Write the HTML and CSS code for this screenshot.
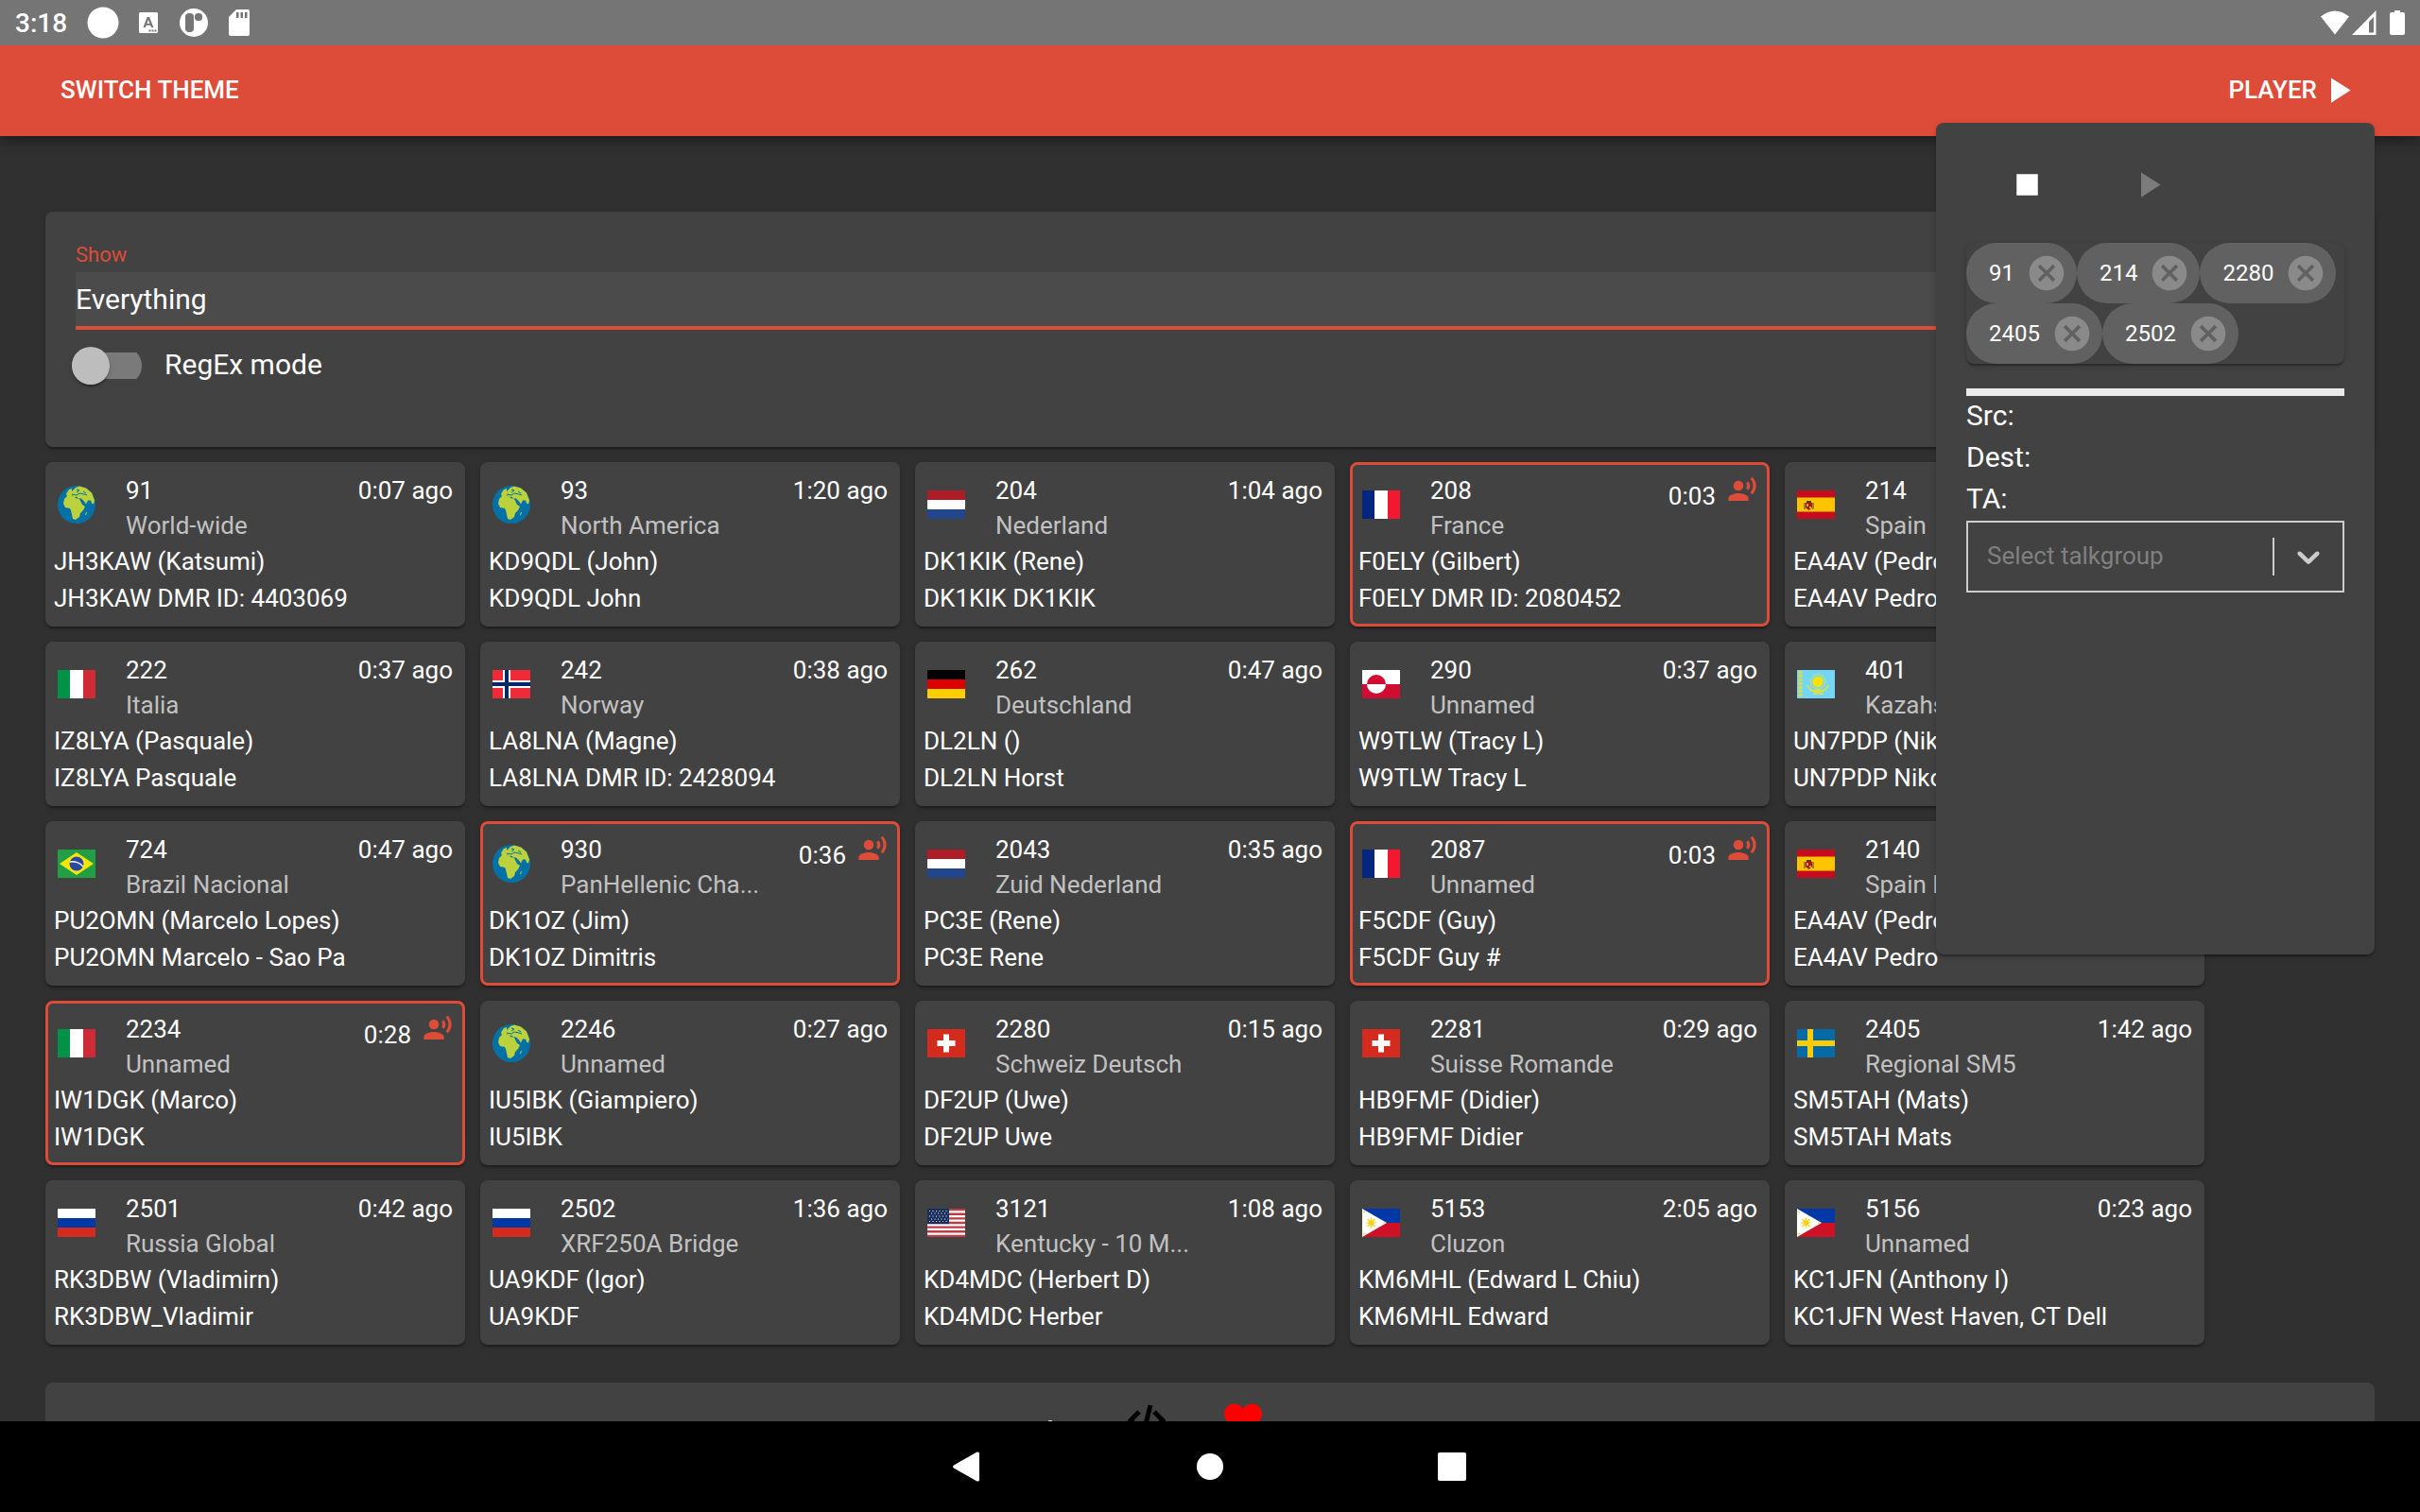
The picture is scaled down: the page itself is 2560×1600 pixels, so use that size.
FILE: index.html
```html
<!DOCTYPE html>
<html lang="en">
<head>
<meta charset="utf-8">
<meta name="viewport" content="width=device-width, initial-scale=1">
<title>Talkgroup monitor</title>
<link rel="stylesheet" href="styles.css">
</head>
<body>
<svg class="sprite" aria-hidden="true">
  <symbol id="i-play" viewBox="0 0 24 24"><path d="M8 5v14l11-7z"/></symbol>
  <symbol id="i-stop" viewBox="0 0 24 24"><path d="M6 6h12v12H6z"/></symbol>
  <symbol id="i-cancel" viewBox="0 0 24 24"><path d="M12 2C6.47 2 2 6.47 2 12s4.47 10 10 10 10-4.47 10-10S17.53 2 12 2zm5 13.59L15.59 17 12 13.41 8.41 17 7 15.59 10.59 12 7 8.41 8.41 7 12 10.59 15.59 7 17 8.41 13.41 12 17 15.59z"/></symbol>
  <symbol id="i-voice" viewBox="0 0 24 24"><circle cx="9" cy="9" r="4"/><path d="M9 15c-2.67 0-8 1.34-8 4v2h16v-2c0-2.660-5.330-4-8-4zM16.760 5.360l-1.680 1.690c.84 1.180.84 2.710 0 3.890l1.680 1.690c2.020-2.020 2.020-5.070 0-7.270zM20.070 2l-1.630 1.630c2.770 3.020 2.770 7.560 0 10.740L20.070 16c3.900-3.890 3.910-9.950 0-14z"/></symbol>
  <symbol id="i-world" viewBox="0 0 40 40"><circle cx="20" cy="20" r="20" fill="#0471a6"/><path fill="#bcd23c" d="M10 7l2-3 3-1v3l4-4 4-1.500 7 2 6 5 3 8-1 4-2-1-1-3-3 0-2 4-2-3-3-3-3 0-2-2-2 1-2-2-4 1-2 0-1-3zM7 14l3-3 6 0 3 2 4 1 3 6 3 2-2 4-3 3-1 4-4 3-3-1-2-9-1-2-5-1-2-4zM29 31l1-3 1 0-1 3z"/><path fill="none" stroke="#0471a6" d="M15 9l5 1 3-2 5 1 3 1M24 14l3 5M20 4l3 1-3 2M27 6l3 2"/></symbol>
  <symbol id="i-nl" viewBox="0 0 40 30"><path fill="#ae1c28" d="M0 0h40v10H0z"/><path fill="#fff" d="M0 10h40v10H0z"/><path fill="#21468b" d="M0 20h40v10H0z"/></symbol>
  <symbol id="i-fr" viewBox="0 0 40 30"><path fill="#00267f" d="M0 0h14v30H0z"/><path fill="#fff" d="M13 0h14v30H13z"/><path fill="#f31830" d="M27 0h13v30H27z"/></symbol>
  <symbol id="i-it" viewBox="0 0 40 30"><path fill="#009246" d="M0 0h14v30H0z"/><path fill="#fff" d="M13 0h14v30H13z"/><path fill="#ce2b37" d="M27 0h13v30H27z"/></symbol>
  <symbol id="i-es" viewBox="0 0 40 30"><path fill="#c60b1e" d="M0 0h40v30H0z"/><path fill="#ffc400" d="M0 7.500h40v15H0z"/><path fill="#ad1519" d="M9 13h7v5l-3.500 3L9 18z"/><path fill="#c8b100" d="M10 14h2v3h-2zM13 17h2v2h-2z"/><path fill="#5a3a1a" d="M10 11h5v2h-5zM7.500 13h1v7h-1zM16.500 13h1v7h-1z"/></symbol>
  <symbol id="i-no" viewBox="0 0 40 30"><path fill="#ef2b3a" d="M0 0h40v30H0z"/><path fill="#fff" d="M11 0h8v30h-8zM0 11h40v8H0z"/><path fill="#002868" d="M13 0h4v30h-4zM0 13h40v4H0z"/></symbol>
  <symbol id="i-de" viewBox="0 0 40 30"><path fill="#000" d="M0 0h40v10H0z"/><path fill="#d00" d="M0 10h40v10H0z"/><path fill="#ffce00" d="M0 20h40v10H0z"/></symbol>
  <symbol id="i-gl" viewBox="0 0 40 30"><path fill="#fff" d="M0 0h40v15H0z"/><path fill="#d00c33" d="M0 15h40v15H0zM5 15a10 10 0 0 1 20 0z"/><path fill="#fff" d="M5 15a10 10 0 0 0 20 0z"/></symbol>
  <symbol id="i-kz" viewBox="0 0 40 30"><path fill="#74d7f7" d="M0 0h40v30H0z"/><circle cx="22" cy="12.500" r="5.500" fill="#ffe400"/><circle cx="22" cy="12.500" r="7.500" fill="none" stroke="#ffe400" stroke-width="1.500" stroke-dasharray="1 1"/><path fill="none" stroke="#e3e23a" stroke-width="1.500" d="M11 16c2 6 7 7 11 5 4 2 9 1 11-5M14 21c5 3 12 3 16 0M17 25h11"/><path stroke="#d8dc4a" stroke-width="4" stroke-dasharray="3 1" d="M3.500 1v28"/></symbol>
  <symbol id="i-br" viewBox="0 0 40 30"><path fill="#229e45" d="M0 0h40v30H0z"/><path fill="#f8e509" d="M20 3l18 12-18 12L2 15z"/><circle cx="20" cy="15" r="7.500" fill="#2b49a3"/><path fill="none" stroke="#fff" stroke-width="1.500" d="M13 13c5-1 11 1 14 5"/></symbol>
  <symbol id="i-ch" viewBox="0 0 40 30"><path fill="#d52b1e" d="M0 0h40v30H0z"/><path fill="#fff" d="M17 5.500h6V12h6.500v6H23v6.500h-6V18h-6.500v-6H17z"/></symbol>
  <symbol id="i-se" viewBox="0 0 40 30"><path fill="#066aa7" d="M0 0h40v30H0z"/><path fill="#fecc00" d="M11 0h6v30h-6zM0 12h40v6H0z"/></symbol>
  <symbol id="i-ru" viewBox="0 0 40 30"><path fill="#fff" d="M0 0h40v10H0z"/><path fill="#0039a6" d="M0 10h40v10H0z"/><path fill="#d52b1e" d="M0 20h40v10H0z"/></symbol>
  <symbol id="i-us" viewBox="0 0 40 30"><path fill="#fff" d="M0 0h40v30H0z"/><path stroke="#bd3d44" stroke-width="2.300" d="M0 1.150h40M0 5.770h40M0 10.380h40M0 15h40M0 19.620h40M0 24.230h40M0 28.850h40"/><path fill="#192f5d" d="M0 0h23v16.150H0z"/><path stroke="#fff" stroke-dasharray="1 2.500" d="M2 2.500h20M4 5h18M2 8h20M4 11h18M2 13.500h20"/></symbol>
  <symbol id="i-ph" viewBox="0 0 40 30"><path fill="#0038a8" d="M0 0h40v15H0z"/><path fill="#ce1126" d="M0 15h40v15H0z"/><path fill="#fff" d="M0 0l26 15L0 30z"/><circle cx="9.500" cy="15" r="3" fill="#fcd116"/><path stroke="#fcd116" stroke-width="1.200" d="M4 15h11M9.500 9.500v11M5.500 11l8 8M5.500 19l8-8M1 3l2 1M1 27l2-1M22 15h2"/></symbol>
</svg>

<header class="status">
  <span class="clock">3:18</span>
  <svg width="34" height="34" viewBox="0 0 34 34"><circle cx="17" cy="17" r="16.500"/></svg>
  <svg class="status-a" width="20" height="22" viewBox="0 0 20 22"><path fill-rule="evenodd" d="M1.500 0h17Q20 0 20 1.500v19q0 1.500-1.500 1.500h-17Q0 22 0 20.500v-19Q0 0 1.500 0zM8.700 5L4.500 16h2.300l.9-2.300h4.400L13 16h2.300L11.100 5zM9.900 7.700l1.500 4.200h-3zM10.500 18.500v2h2v-2zM13.500 18.500v2h2v-2zM16.500 18.500v2h2v-2z"/></svg>
  <svg class="status-p" width="30" height="30" viewBox="0 0 30 30"><circle cx="15" cy="15" r="15"/><rect x="6" y="5" width="9" height="20" rx="4" fill="#757575"/><rect x="16" y="5" width="8" height="8" rx="3.500" fill="#757575"/></svg>
  <svg class="status-sd" width="22" height="28" viewBox="0 0 22 28"><path d="M8 0h12q2 0 2 2v24q0 2-2 2H2q-2 0-2-2V8z"/><path fill="#757575" d="M8 3h2.500v6H8zM12.500 3H15v6h-2.500zM17 3h2.500v6H17z"/></svg>
  <span class="spacer"></span>
  <svg width="30" height="26" viewBox="0 0 30 26"><path d="M15 25.500L0 6.500Q15-5.500 30 6.500z"/></svg>
  <svg class="status-signal" width="26" height="26" viewBox="0 0 26 26"><path fill-rule="evenodd" d="M25.500 0v26H0zM23 7l-5 5v11.500h5z"/></svg>
  <svg width="16" height="26" viewBox="0 0 16 26"><path d="M5 0h6v2h3q2 0 2 2v20q0 2-2 2H2q-2 0-2-2V4q0-2 2-2h3z"/></svg>
</header>

<div class="app">
  <div class="appbar">
    <button class="bar-btn" type="button">SWITCH THEME</button>
    <div class="player">
      <button class="bar-btn" type="button">PLAYER<svg class="icon"><use href="#i-play"/></svg></button>
      <section class="panel" aria-label="Player">
        <div class="controls">
          <button type="button" aria-label="Stop"><svg class="icon"><use href="#i-stop"/></svg></button>
          <button type="button" aria-label="Play" disabled><svg class="icon"><use href="#i-play"/></svg></button>
        </div>
        <div class="chips">
          <span class="chip">91<button type="button" aria-label="Remove 91"><svg><use href="#i-cancel"/></svg></button></span>
          <span class="chip">214<button type="button" aria-label="Remove 214"><svg><use href="#i-cancel"/></svg></button></span>
          <span class="chip">2280<button type="button" aria-label="Remove 2280"><svg><use href="#i-cancel"/></svg></button></span>
          <span class="chip">2405<button type="button" aria-label="Remove 2405"><svg><use href="#i-cancel"/></svg></button></span>
          <span class="chip">2502<button type="button" aria-label="Remove 2502"><svg><use href="#i-cancel"/></svg></button></span>
        </div>
        <hr class="meter">
        <div class="call">
          <p>Src:</p>
          <p>Dest:</p>
          <p>TA:</p>
        </div>
        <div class="picker">
          <select aria-label="Select talkgroup"><option>Select talkgroup</option></select>
          <span class="picker-arrow"><svg width="40" height="40" viewBox="0 0 20 20"><path d="M4.516 7.548c0.436-0.446 1.043-0.481 1.576 0l3.908 3.747 3.908-3.747c0.533-0.481 1.141-0.446 1.574 0 0.436 0.445 0.408 1.197 0 1.615-0.406 0.418-4.695 4.502-4.695 4.502-0.217 0.223-0.502 0.335-0.787 0.335s-0.570-0.112-0.789-0.335c0 0-4.287-4.084-4.695-4.502s-0.436-1.170 0-1.615z"/></svg></span>
        </div>
      </section>
    </div>
  </div>

  <main>
    <form class="filter">
      <label class="caption" for="show">Show</label>
      <input class="show" id="show" type="text" value="Everything">
      <label class="toggle"><input type="checkbox"><span>RegEx mode</span></label>
    </form>

    <ul class="cards">
      <li class="card"><div class="head"><svg class="flag"><use href="#i-world"/></svg><div class="names"><h2>91</h2><p>World-wide</p></div><div class="time">0:07 ago</div></div><p>JH3KAW (Katsumi)</p><p>JH3KAW DMR ID: 4403069</p></li>
      <li class="card"><div class="head"><svg class="flag"><use href="#i-world"/></svg><div class="names"><h2>93</h2><p>North America</p></div><div class="time">1:20 ago</div></div><p>KD9QDL (John)</p><p>KD9QDL John</p></li>
      <li class="card"><div class="head"><svg class="flag"><use href="#i-nl"/></svg><div class="names"><h2>204</h2><p>Nederland</p></div><div class="time">1:04 ago</div></div><p>DK1KIK (Rene)</p><p>DK1KIK DK1KIK</p></li>
      <li class="card live"><div class="head"><svg class="flag"><use href="#i-fr"/></svg><div class="names"><h2>208</h2><p>France</p></div><div class="time">0:03<svg><use href="#i-voice"/></svg></div></div><p>F0ELY (Gilbert)</p><p>F0ELY DMR ID: 2080452</p></li>
      <li class="card"><div class="head"><svg class="flag"><use href="#i-es"/></svg><div class="names"><h2>214</h2><p>Spain</p></div></div><p>EA4AV (Pedro)</p><p>EA4AV Pedro</p></li>

      <li class="card"><div class="head"><svg class="flag"><use href="#i-it"/></svg><div class="names"><h2>222</h2><p>Italia</p></div><div class="time">0:37 ago</div></div><p>IZ8LYA (Pasquale)</p><p>IZ8LYA Pasquale</p></li>
      <li class="card"><div class="head"><svg class="flag"><use href="#i-no"/></svg><div class="names"><h2>242</h2><p>Norway</p></div><div class="time">0:38 ago</div></div><p>LA8LNA (Magne)</p><p>LA8LNA DMR ID: 2428094</p></li>
      <li class="card"><div class="head"><svg class="flag"><use href="#i-de"/></svg><div class="names"><h2>262</h2><p>Deutschland</p></div><div class="time">0:47 ago</div></div><p>DL2LN ()</p><p>DL2LN Horst</p></li>
      <li class="card"><div class="head"><svg class="flag"><use href="#i-gl"/></svg><div class="names"><h2>290</h2><p>Unnamed</p></div><div class="time">0:37 ago</div></div><p>W9TLW (Tracy L)</p><p>W9TLW Tracy L</p></li>
      <li class="card"><div class="head"><svg class="flag"><use href="#i-kz"/></svg><div class="names"><h2>401</h2><p>Kazahstan</p></div></div><p>UN7PDP (Nikolay)</p><p>UN7PDP Nikolay</p></li>

      <li class="card"><div class="head"><svg class="flag"><use href="#i-br"/></svg><div class="names"><h2>724</h2><p>Brazil Nacional</p></div><div class="time">0:47 ago</div></div><p>PU2OMN (Marcelo Lopes)</p><p>PU2OMN Marcelo - Sao Pa</p></li>
      <li class="card live"><div class="head"><svg class="flag"><use href="#i-world"/></svg><div class="names"><h2>930</h2><p>PanHellenic Cha...</p></div><div class="time">0:36<svg><use href="#i-voice"/></svg></div></div><p>DK1OZ (Jim)</p><p>DK1OZ Dimitris</p></li>
      <li class="card"><div class="head"><svg class="flag"><use href="#i-nl"/></svg><div class="names"><h2>2043</h2><p>Zuid Nederland</p></div><div class="time">0:35 ago</div></div><p>PC3E (Rene)</p><p>PC3E Rene</p></li>
      <li class="card live"><div class="head"><svg class="flag"><use href="#i-fr"/></svg><div class="names"><h2>2087</h2><p>Unnamed</p></div><div class="time">0:03<svg><use href="#i-voice"/></svg></div></div><p>F5CDF (Guy)</p><p>F5CDF Guy #</p></li>
      <li class="card"><div class="head"><svg class="flag"><use href="#i-es"/></svg><div class="names"><h2>2140</h2><p>Spain Nacional</p></div></div><p>EA4AV (Pedro)</p><p>EA4AV Pedro</p></li>

      <li class="card live"><div class="head"><svg class="flag"><use href="#i-it"/></svg><div class="names"><h2>2234</h2><p>Unnamed</p></div><div class="time">0:28<svg><use href="#i-voice"/></svg></div></div><p>IW1DGK (Marco)</p><p>IW1DGK</p></li>
      <li class="card"><div class="head"><svg class="flag"><use href="#i-world"/></svg><div class="names"><h2>2246</h2><p>Unnamed</p></div><div class="time">0:27 ago</div></div><p>IU5IBK (Giampiero)</p><p>IU5IBK</p></li>
      <li class="card"><div class="head"><svg class="flag"><use href="#i-ch"/></svg><div class="names"><h2>2280</h2><p>Schweiz Deutsch</p></div><div class="time">0:15 ago</div></div><p>DF2UP (Uwe)</p><p>DF2UP Uwe</p></li>
      <li class="card"><div class="head"><svg class="flag"><use href="#i-ch"/></svg><div class="names"><h2>2281</h2><p>Suisse Romande</p></div><div class="time">0:29 ago</div></div><p>HB9FMF (Didier)</p><p>HB9FMF Didier</p></li>
      <li class="card"><div class="head"><svg class="flag"><use href="#i-se"/></svg><div class="names"><h2>2405</h2><p>Regional SM5</p></div><div class="time">1:42 ago</div></div><p>SM5TAH (Mats)</p><p>SM5TAH Mats</p></li>

      <li class="card"><div class="head"><svg class="flag"><use href="#i-ru"/></svg><div class="names"><h2>2501</h2><p>Russia Global</p></div><div class="time">0:42 ago</div></div><p>RK3DBW (Vladimirn)</p><p>RK3DBW_Vladimir</p></li>
      <li class="card"><div class="head"><svg class="flag"><use href="#i-ru"/></svg><div class="names"><h2>2502</h2><p>XRF250A Bridge</p></div><div class="time">1:36 ago</div></div><p>UA9KDF (Igor)</p><p>UA9KDF</p></li>
      <li class="card"><div class="head"><svg class="flag"><use href="#i-us"/></svg><div class="names"><h2>3121</h2><p>Kentucky - 10 M...</p></div><div class="time">1:08 ago</div></div><p>KD4MDC (Herbert D)</p><p>KD4MDC Herber</p></li>
      <li class="card"><div class="head"><svg class="flag"><use href="#i-ph"/></svg><div class="names"><h2>5153</h2><p>Cluzon</p></div><div class="time">2:05 ago</div></div><p>KM6MHL (Edward L Chiu)</p><p>KM6MHL Edward</p></li>
      <li class="card"><div class="head"><svg class="flag"><use href="#i-ph"/></svg><div class="names"><h2>5156</h2><p>Unnamed</p></div><div class="time">0:23 ago</div></div><p>KC1JFN (Anthony I)</p><p>KC1JFN West Haven, CT Dell</p></li>
    </ul>

    <footer class="links">
      <a href="#about" aria-label="About"><svg width="40" height="40" viewBox="0 0 40 40"><circle cx="20" cy="23" r="3" fill="#fff"/><path fill="#fff" d="M17 28h6v11h-6z"/></svg></a>
      <a href="#source" aria-label="Source code"><svg width="40" height="40" viewBox="0 0 40 40"><path fill="none" stroke="#000" stroke-width="5" d="M24 4l-8 32M12 11l-9 9 9 9M28 11l9 9-9 9"/></svg></a>
      <a href="#donate" aria-label="Donate"><svg width="40" height="40" viewBox="0 0 512 512"><path fill="red" d="M462.300 62.600C407.500 15.900 326 24.300 275.700 76.200L256 96.500l-19.700-20.300C186.100 24.300 104.500 15.900 49.700 62.600c-62.800 53.600-66.100 149.800-9.900 207.900l193.500 199.800c12.500 12.900 32.800 12.900 45.300 0l193.500-199.800c56.300-58.100 53-154.300-9.800-207.900z"/></svg></a>
    </footer>
  </main>
</div>

<nav class="sysnav" aria-label="System">
  <button type="button" aria-label="Back"><svg width="32" height="32" viewBox="0 0 32 32"><path d="M1 14.500L25.500 0.500Q28 0 28 2v28q0 2-2.500 1.500L1 17.500q-2-1.500 0-3z"/></svg></button>
  <button type="button" aria-label="Home"><svg width="32" height="32" viewBox="0 0 32 32"><circle cx="16" cy="16" r="14"/></svg></button>
  <button type="button" aria-label="Recents"><svg width="32" height="32" viewBox="0 0 32 32"><rect x="1" y="1" width="30" height="30" rx="2"/></svg></button>
</nav>
</body>
</html>
```
FILE: styles.css
```css
:root {
  --red: #dd4b39;
  --paper: #424242;
  --shadow: 0 4px 2px -2px rgba(0, 0, 0, .2), 0 2px 2px rgba(0, 0, 0, .14), 0 2px 6px rgba(0, 0, 0, .12);
}

* { box-sizing: border-box; }

body {
  margin: 0;
  height: 100vh;
  display: flex;
  flex-direction: column;
  overflow: hidden;
  background: #303030;
  color: #fff;
  font: 26px/39px Roboto, sans-serif;
}

h2, p, ul, hr { margin: 0; padding: 0; }
h2 { font: inherit; }
svg { flex: none; display: block; fill: currentColor; }
button, input, select { font: inherit; color: inherit; border: 0; padding: 0; margin: 0; background: none; }
.sprite { position: absolute; width: 0; height: 0; }
.icon { width: 45px; height: 45px; }

/* status bar */
.status {
  flex: none;
  height: 48px;
  display: flex;
  align-items: center;
  padding: 0 16px;
  background: #757575;
}
.clock { font-size: 28px; font-weight: 500; margin-right: 21px; }
.status-a { margin-left: 21px; }
.status-p { margin-left: 23px; }
.status-sd { margin-left: 22px; }
.status-signal { margin: 0 14px 0 3px; }
.spacer { flex: 1; }

/* app bar */
.app { flex: 1; min-height: 0; overflow: hidden; }
.appbar {
  position: relative;
  z-index: 1;
  height: 96px;
  padding: 0 64px 2px;
  display: flex;
  align-items: center;
  justify-content: space-between;
  background: var(--red);
  box-shadow: 0 4px 8px -2px rgba(0, 0, 0, .2), 0 8px 10px rgba(0, 0, 0, .14), 0 2px 20px rgba(0, 0, 0, .12);
}
.bar-btn { display: flex; align-items: center; font-weight: 500; }

/* player popover */
.panel {
  position: absolute;
  top: 82px;
  right: 48px;
  width: 464px;
  min-height: 880px;
  padding: 32px;
  border-radius: 8px;
  background: var(--paper);
  box-shadow: var(--shadow);
}
.controls { display: flex; margin-bottom: 29px; }
.controls button { width: 128px; height: 66px; display: grid; place-items: center; }
.controls button:disabled { color: #7b7b7b; }
.chips { display: flex; flex-wrap: wrap; border-radius: 8px; box-shadow: var(--shadow); }
.chip {
  height: 64px;
  padding: 0 10px 0 24px;
  display: flex;
  align-items: center;
  gap: 12px;
  border-radius: 32px;
  background: #616161;
  font-size: 24px;
}
.chip button { color: #8a8a8a; }
.chip svg { width: 44px; height: 44px; }
.meter { height: 8px; margin-top: 26px; border: 0; background: #ebebeb; }
.call { height: 132px; font-size: 30px; line-height: 44px; margin: -1px 0 1px; }
.picker {
  height: 76px;
  display: grid;
  grid-template-columns: 1fr 74px;
  align-items: center;
  border: 2px solid #ccc;
}
.picker select { grid-area: 1 / 1 / 2 / 3; height: 72px; padding: 0 0 2px 20px; appearance: none; color: #808080; border-radius: 0; }
.picker-arrow { grid-area: 1 / 2; height: 40px; padding-left: 16px; border-left: 2px solid #ccc; color: #ccc; pointer-events: none; }

/* page */
main { padding: 80px 48px 0; }
.filter {
  display: flex;
  flex-direction: column;
  align-items: flex-start;
  height: 249px;
  padding: 28px 32px;
  border-radius: 8px;
  background: var(--paper);
  box-shadow: var(--shadow);
}
.caption { height: 36px; line-height: 36px; font-size: 22px; color: var(--red); }
.show { width: 100%; height: 61px; background: #4b4b4b; border-bottom: 4px solid var(--red); border-radius: 0; font-size: 30px; outline: 0; }
.toggle { display: flex; align-items: center; gap: 24px; height: 76px; font-size: 30px; }
.toggle span { padding-bottom: 3px; }
.toggle input {
  appearance: none;
  width: 74px;
  height: 40px;
  margin-left: -4px;
  display: flex;
  align-items: center;
  background: linear-gradient(#7a7a7a, #7a7a7a) center / 100% 28px no-repeat;
  border-radius: 20px;
}
.toggle input::before {
  content: "";
  width: 40px;
  height: 40px;
  border-radius: 50%;
  background: #bdbdbd;
  box-shadow: var(--shadow);
}

.cards {
  list-style: none;
  margin-top: 16px;
  display: grid;
  grid-template-columns: repeat(auto-fill, 444px);
  gap: 16px;
}
.card {
  padding: 9px 6px 7px;
  border: 3px solid var(--paper);
  border-radius: 8px;
  background: var(--paper);
  box-shadow: var(--shadow);
  white-space: nowrap;
}
.card.live { border-color: var(--red); }
.head { display: flex; padding: 0 4px; line-height: 37px; }
.flag { width: 40px; height: 40px; margin: 13px 32px 0 0; }
.names { flex: 1; }
.names p { color: #c1c1c1; }
.time { display: flex; gap: 12px; }
.live .time { line-height: 48px; }
.time svg { width: 32px; height: 32px; margin-top: 1px; color: var(--red); }

.links {
  margin-top: 40px;
  padding: 20px 134px 20px 0;
  display: flex;
  justify-content: center;
  gap: 62px;
  border-radius: 8px;
  background: var(--paper);
}

/* system navigation */
.sysnav {
  flex: none;
  height: 96px;
  display: flex;
  align-items: center;
  justify-content: center;
  gap: 224px;
  background: #000;
}
```
